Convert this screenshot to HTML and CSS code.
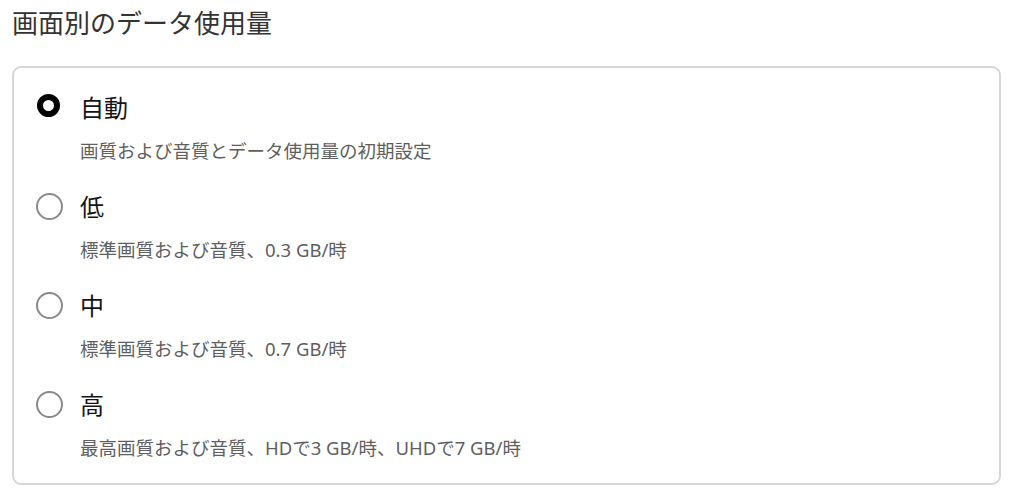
FILE: index.html
```html
<!DOCTYPE html>
<html lang="ja">
<head>
<meta charset="utf-8">
<link rel="stylesheet" href="styles.css">
</head>
<body>
<main class="page">
  <h1 class="title">画面別のデータ使用量</h1>
  <div class="card" role="radiogroup">
    <div class="option">
      <div class="option-head">
        <span class="radio-cell"><span class="radio radio-on"></span></span>
        <span class="label">自動</span>
      </div>
      <div class="desc">画質および音質とデータ使用量の初期設定</div>
    </div>
    <div class="option">
      <div class="option-head">
        <span class="radio-cell"><span class="radio"></span></span>
        <span class="label">低</span>
      </div>
      <div class="desc">標準画質および音質、0.3 GB/時</div>
    </div>
    <div class="option">
      <div class="option-head">
        <span class="radio-cell"><span class="radio"></span></span>
        <span class="label">中</span>
      </div>
      <div class="desc">標準画質および音質、0.7 GB/時</div>
    </div>
    <div class="option">
      <div class="option-head">
        <span class="radio-cell"><span class="radio"></span></span>
        <span class="label">高</span>
      </div>
      <div class="desc">最高画質および音質、HDで3 GB/時、UHDで7 GB/時</div>
    </div>
  </div>
</main>
</body>
</html>
```

FILE: styles.css
```css
html, body {
  margin: 0;
  padding: 0;
  background: #ffffff;
}
body {
  font-family: "Liberation Sans", "Noto Sans CJK JP", sans-serif;
  color: #141414;
}
.page {
  padding: 0 24px 0 12px;
}
.title {
  margin: 0;
  padding-top: 8px;
  font-size: 26px;
  line-height: 32px;
  font-weight: 400;
  color: #333333;
}
.card {
  box-sizing: border-box;
  margin-top: 26px;
  width: 989px;
  border: 2px solid #d6d6d6;
  border-radius: 9px;
  padding: 25px 0 23px 22px;
  display: flex;
  flex-direction: column;
  gap: 29px;
}
.option {
  display: flex;
  flex-direction: column;
}
.option-head {
  display: flex;
  align-items: center;
  height: 32px;
}
.radio-cell {
  width: 44px;
  flex: none;
  display: flex;
  align-items: center;
}
.radio {
  box-sizing: border-box;
  width: 27px;
  height: 27px;
  border: 2px solid #8a8a8a;
  border-radius: 50%;
  margin-bottom: 3px;
}
.radio-on {
  width: 23px;
  height: 23px;
  margin-left: 1px;
  border: 6.5px solid #000000;
  margin-bottom: 8px;
}
.label {
  font-size: 24px;
  line-height: 32px;
  color: #141414;
}
.desc {
  margin-top: 14px;
  padding-left: 44px;
  font-family: "Noto Sans", "Noto Sans CJK JP", sans-serif;
  font-size: 18.5px;
  line-height: 24px;
  color: #5e5e5e;
}
```
